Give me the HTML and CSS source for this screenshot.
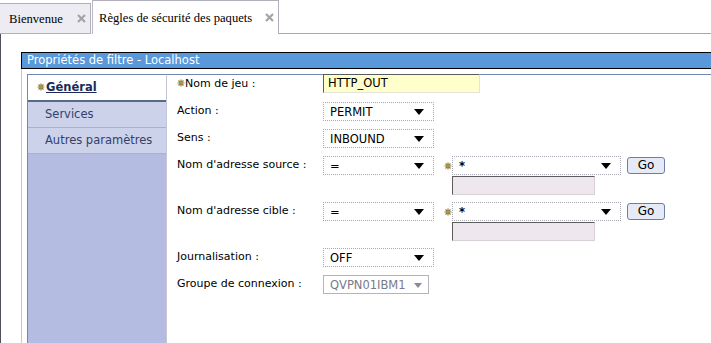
FILE: index.html
```html
<!DOCTYPE html>
<html>
	<head>
		<meta charset="utf-8">
		<title>Règles de sécurité des paquets</title>
		<link rel="stylesheet" href="styles.css">
	</head>
	<body>
		<div class="tabs">
			<div class="tab">
				<span class="tab-text">Bienvenue</span>
				<svg class="tab-close" width="9" height="9" viewBox="0 0 9 9"><path d="M1 1L8 8M8 1L1 8" stroke="#a4a4a8" stroke-width="2.2"/></svg>
			</div>
			<div class="tab tab-on">
				<span class="tab-text">Règles de sécurité des paquets</span>
				<svg class="tab-close" width="9" height="9" viewBox="0 0 9 9"><path d="M1 1L8 8M8 1L1 8" stroke="#a4a4a8" stroke-width="2.2"/></svg>
			</div>
			<div class="tab-fill"></div>
		</div>

		<div class="main">
			<div class="panel">
				<div class="panel-title">Propriétés de filtre - Localhost</div>
				<div class="panel-body">
					<ul class="nav">
						<li class="nav-on"><svg class="star" width="8" height="8" viewBox="0 0 8 8"><path d="M4 0.5V7.5M0.5 4H7.5M1.5 1.5L6.5 6.5M6.5 1.5L1.5 6.5" stroke="#8a7a3a" stroke-width="1.2"/><circle cx="4" cy="4" r="1.8" fill="#a89848"/></svg><a>Général</a></li>
						<li>Services</li>
						<li>Autres paramètres</li>
					</ul>

					<div class="form">
						<div class="row">
							<div class="label"><svg class="star" width="8" height="8" viewBox="0 0 8 8"><path d="M4 0.5V7.5M0.5 4H7.5M1.5 1.5L6.5 6.5M6.5 1.5L1.5 6.5" stroke="#8a7a3a" stroke-width="1.2"/><circle cx="4" cy="4" r="1.8" fill="#a89848"/></svg>Nom de jeu :</div>
							<div class="input input-yellow">HTTP_OUT</div>
						</div>
						<div class="row">
							<div class="label">Action :</div>
							<div class="select">PERMIT<span class="arrow"></span></div>
						</div>
						<div class="row">
							<div class="label">Sens :</div>
							<div class="select">INBOUND<span class="arrow"></span></div>
						</div>
						<div class="row row-tall">
							<div class="label">Nom d'adresse source :</div>
							<div class="select">=<span class="arrow"></span></div>
							<div class="addr">
								<div class="addr-top">
									<svg class="star" width="8" height="8" viewBox="0 0 8 8"><path d="M4 0.5V7.5M0.5 4H7.5M1.5 1.5L6.5 6.5M6.5 1.5L1.5 6.5" stroke="#8a7a3a" stroke-width="1.2"/><circle cx="4" cy="4" r="1.8" fill="#a89848"/></svg>
									<div class="select select-wide">*<span class="arrow"></span></div>
									<div class="btn">Go</div>
								</div>
								<div class="input input-gray"></div>
							</div>
						</div>
						<div class="row row-tall">
							<div class="label">Nom d'adresse cible :</div>
							<div class="select">=<span class="arrow"></span></div>
							<div class="addr">
								<div class="addr-top">
									<svg class="star" width="8" height="8" viewBox="0 0 8 8"><path d="M4 0.5V7.5M0.5 4H7.5M1.5 1.5L6.5 6.5M6.5 1.5L1.5 6.5" stroke="#8a7a3a" stroke-width="1.2"/><circle cx="4" cy="4" r="1.8" fill="#a89848"/></svg>
									<div class="select select-wide">*<span class="arrow"></span></div>
									<div class="btn">Go</div>
								</div>
								<div class="input input-gray"></div>
							</div>
						</div>
						<div class="row">
							<div class="label">Journalisation :</div>
							<div class="select">OFF<span class="arrow"></span></div>
						</div>
						<div class="row">
							<div class="label">Groupe de connexion :</div>
							<div class="select select-off">QVPN01IBM1<span class="arrow"></span></div>
						</div>
					</div>
				</div>
			</div>
		</div>
	</body>
</html>
```

FILE: styles.css
```css
* {
	margin: 0;
	padding: 0;
	list-style: none;
	box-sizing: border-box;
}

body {
	width: 711px;
	height: 343px;
	overflow: hidden;
	background: #fff;
	font-family: "DejaVu Sans", Verdana, sans-serif;
	font-size: 11px;
	color: #000;
}

/* onglets */
.tabs {
	display: flex;
	align-items: flex-end;
	height: 34px;
}

.tab {
	display: flex;
	align-items: center;
	height: 31px;
	width: 91px;
	padding: 0 4px 0 9px;
	background: #ececf2;
	border: 1px solid #b0b0bc;
	border-left: none;
	font-family: "Liberation Serif", "Times New Roman", serif;
	font-size: 12.6px;
}

.tab-on {
	height: 34px;
	width: 187px;
	margin-left: 1px;
	padding-left: 6px;
	background: #fff;
	border-left: 1px solid #b8b8c8;
	border-bottom: none;
}

.tab-text {
	flex: 1;
	padding-top: 2px;
}

.tab-fill {
	flex: 1;
	height: 1px;
	background: #aaa4b8;
}

/* zone principale */
.main {
	height: 309px;
	border-left: 1px solid #50505c;
	padding: 18px 0 0 20px;
}

.panel {
	height: 100%;
}

.panel-title {
	height: 17px;
	background: #5a98dc;
	border: 1px solid #000;
	border-right: none;
	color: #fff;
	font-size: 11.5px;
	line-height: 15px;
	padding-left: 5px;
}

.panel-body {
	display: flex;
	height: calc(100% - 17px);
	border-left: 1px solid #c8c8cc;
	padding: 5px 0 0 5px;
}

.nav {
	width: 140px;
	background: #b4bce2;
	border-top: 1px solid #7088b0;
	border-left: 1px solid #7a86a8;
	border-right: 1px solid #c4c8d4;
}

.nav li {
	height: 26px;
	line-height: 25px;
	padding-left: 17px;
	background: #ccd2ea;
	border-bottom: 1px solid #a8b2cc;
	color: #34406a;
	font-size: 11.5px;
}

.nav li.nav-on {
	padding-left: 9px;
	background: #fff;
	border-bottom: 2px solid #586888;
	height: 27px;
}

.nav li.nav-on a {
	font-weight: bold;
	text-decoration: underline;
	color: #1c2a58;
	margin-left: 1px;
}

.star {
	display: inline-block;
	vertical-align: 0;
}

/* formulaire */
.form {
	flex: 1;
	border-top: 1px solid #7088b0;
	padding: 0 0 0 10px;
}

.row {
	display: flex;
	align-items: flex-start;
	height: 19px;
	margin-bottom: 8px;
}

.row-tall {
	height: 38px;
}

.label {
	width: 146px;
	line-height: 17px;
	font-size: 11px;
	white-space: nowrap;
}

.input {
	height: 19px;
	line-height: 17px;
	padding-left: 4px;
	border: 1px solid #e4e4d8;
	border-left-color: #5c5c5c;
	border-top-color: #5c5c5c;
	font-size: 11.5px;
}

.input-yellow {
	width: 157px;
	background: #ffffcc;
	margin-top: -1px;
}

.input-gray {
	width: 143px;
	height: 19px;
	margin: 1px 0 0 8px;
	background: #eee8ee;
	border-right-color: #d8d0d8;
	border-bottom-color: #d8d0d8;
}

.select {
	position: relative;
	width: 111px;
	height: 19px;
	line-height: 18px;
	padding-left: 6px;
	border: 1px dotted #a8a8b0;
	font-size: 11.5px;
}

.select .arrow {
	position: absolute;
	right: 9px;
	top: 6px;
	border-left: 5px solid transparent;
	border-right: 5px solid transparent;
	border-top: 6px solid #000;
}

.select-wide {
	width: 169px;
	font-weight: bold;
}

.select-off {
	width: 106px;
	border: 1px solid #b4b4bc;
	color: #7a7a88;
}

.select-off .arrow {
	right: 6px;
	top: 7px;
	border-left-width: 4px;
	border-right-width: 4px;
	border-top: 5px solid #8a8a98;
}

.addr {
	margin-left: 10px;
}

.addr-top {
	display: flex;
	align-items: center;
}

.btn {
	width: 38px;
	height: 17px;
	margin-left: 6px;
	border: 1px solid #6a7ea8;
	border-radius: 3px;
	background: #e6eaf6;
	text-align: center;
	line-height: 15px;
	font-size: 12px;
}
```
